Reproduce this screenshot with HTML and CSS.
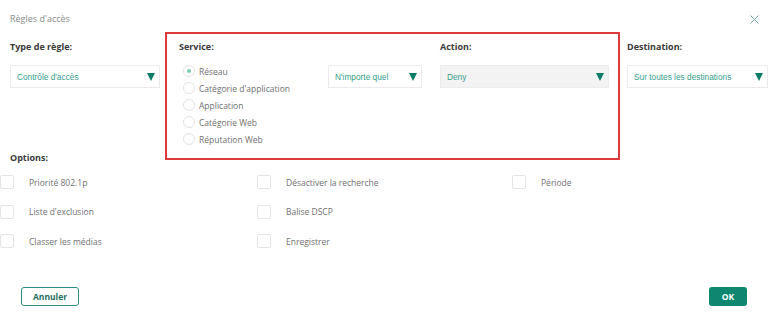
FILE: index.html
```html
<!DOCTYPE html>
<html lang="fr">
<head>
<meta charset="utf-8">
<title>Règles d'accès</title>
<link rel="stylesheet" href="styles.css">
</head>
<body>
<div class="dialog">
  <div class="header">
    <span class="title">Règles d'accès</span>
    <svg class="close" width="9" height="9" viewBox="0 0 9 9"><path d="M0.5 0.5L8.5 8.5M8.5 0.5L0.5 8.5" stroke="#6fa8a0" stroke-width="1" fill="none"/></svg>
  </div>

  <div class="fields">
    <div class="col col-type">
      <div class="label">Type de règle:</div>
      <div class="select"><span>Contrôle d'accès</span><i class="caret"></i></div>
    </div>

    <div class="redbox">
      <div class="col col-service">
        <div class="label">Service:</div>
        <div class="service-row">
          <div class="radios">
            <div class="radio-item"><span class="radio checked"></span>Réseau</div>
            <div class="radio-item"><span class="radio"></span>Catégorie d'application</div>
            <div class="radio-item"><span class="radio"></span>Application</div>
            <div class="radio-item"><span class="radio"></span>Catégorie Web</div>
            <div class="radio-item"><span class="radio"></span>Réputation Web</div>
          </div>
          <div class="select select-any"><span>N'importe quel</span><i class="caret"></i></div>
        </div>
      </div>
      <div class="col col-action">
        <div class="label">Action:</div>
        <div class="select select-gray"><span>Deny</span><i class="caret"></i></div>
      </div>
    </div>

    <div class="col col-dest">
      <div class="label">Destination:</div>
      <div class="select"><span>Sur toutes les destinations</span><i class="caret"></i></div>
    </div>
  </div>

  <div class="options-title">Options:</div>
  <div class="options">
    <div class="opt"><span class="check"></span>Priorité 802.1p</div>
    <div class="opt"><span class="check"></span>Désactiver la recherche</div>
    <div class="opt"><span class="check"></span>Période</div>
    <div class="opt"><span class="check"></span>Liste d'exclusion</div>
    <div class="opt"><span class="check"></span>Balise DSCP</div>
    <div class="opt"></div>
    <div class="opt"><span class="check"></span>Classer les médias</div>
    <div class="opt"><span class="check"></span>Enregistrer</div>
    <div class="opt"></div>
  </div>

  <div class="footer">
    <button class="btn btn-cancel">Annuler</button>
    <button class="btn btn-ok">OK</button>
  </div>
</div>
</body>
</html>
```

FILE: styles.css
```css
html, body {
  margin: 0;
  padding: 0;
  background: #ffffff;
}
body {
  font-family: "Open Sans", "Noto Sans", sans-serif;
  color: #555;
  width: 768px;
  height: 324px;
  overflow: hidden;
}
.dialog {
  width: 768px;
}
.header {
  height: 32px;
  box-sizing: border-box;
  padding: 12px 9px 0 10px;
  display: flex;
  justify-content: space-between;
  align-items: flex-start;
}
.title {
  font-size: 9px;
  line-height: 14px;
  color: #8a8a8a;
}
.close {
  margin-top: 3px;
}
.fields {
  display: flex;
  align-items: flex-start;
  padding-left: 10px;
}
.label {
  font-weight: 700;
  font-size: 9px;
  line-height: 14px;
  color: #3a3a3a;
  margin-bottom: 11px;
}
.col-type {
  width: 150px;
  padding-top: 8px;
  margin-right: 5px;
}
.redbox {
  width: 455px;
  box-sizing: border-box;
  border: 2px solid #de3a3a;
  padding: 6px 9px 10px 12px;
  margin-bottom: -11px;
  display: flex;
  gap: 18px;
}
.col-service {
  width: 243px;
}
.col-action {
  width: 169px;
}
.col-dest {
  width: 141px;
  padding-top: 8px;
  margin-left: 7px;
}
.service-row {
  display: flex;
  align-items: flex-start;
}
.radios {
  width: 145px;
  margin-left: 4px;
  margin-top: -2.5px;
}
.radio-item {
  display: flex;
  align-items: center;
  height: 17px;
  font-size: 8.5px;
  color: #707070;
}
.radio {
  width: 12px;
  height: 12px;
  box-sizing: border-box;
  border: 1px solid #e2e2e2;
  border-radius: 50%;
  margin-right: 4px;
  display: flex;
  align-items: center;
  justify-content: center;
}
.radio.checked::after {
  content: "";
  width: 4px;
  height: 4px;
  border-radius: 50%;
  background: #7cc9b4;
}
.select {
  height: 23px;
  box-sizing: border-box;
  border: 1px solid #ebebeb;
  background: #fff;
  display: flex;
  align-items: center;
  justify-content: space-between;
  padding: 0 4px 0 6px;
  font-family: "Liberation Sans", Arial, sans-serif;
  font-size: 8.3px;
  color: #369e8c;
}
.select-any {
  width: 94px;
}
.select-gray {
  background: #f3f3f3;
  border-color: #ececec;
}
.caret {
  width: 0;
  height: 0;
  border-left: 4px solid transparent;
  border-right: 4px solid transparent;
  border-top: 8px solid #0b7c67;
}
.options-title {
  font-weight: 700;
  font-size: 9px;
  line-height: 14px;
  color: #3a3a3a;
  padding-left: 10px;
  margin-top: 2px;
}
.options {
  margin-top: 3px;
  display: grid;
  grid-template-columns: 257px 255px 1fr;
  grid-auto-rows: 29.5px;
}
.opt {
  display: flex;
  align-items: center;
  font-size: 8.5px;
  color: #707070;
}
.check {
  width: 14px;
  height: 14px;
  box-sizing: border-box;
  border: 1px solid #e4e4e4;
  border-radius: 2px;
  margin-right: 15px;
}
.footer {
  margin-top: 31px;
  display: flex;
  justify-content: space-between;
  padding: 0 21px;
}
.btn {
  height: 19px;
  box-sizing: border-box;
  border-radius: 3px;
  font-family: "Open Sans", "Noto Sans", sans-serif;
  font-weight: 700;
  font-size: 8.5px;
  padding: 0;
  cursor: pointer;
}
.btn-cancel {
  width: 58px;
  background: #fff;
  border: 1.5px solid #2a8f80;
  color: #1d6e62;
}
.btn-ok {
  width: 38px;
  background: #0e8770;
  border: none;
  color: #fff;
}
```
